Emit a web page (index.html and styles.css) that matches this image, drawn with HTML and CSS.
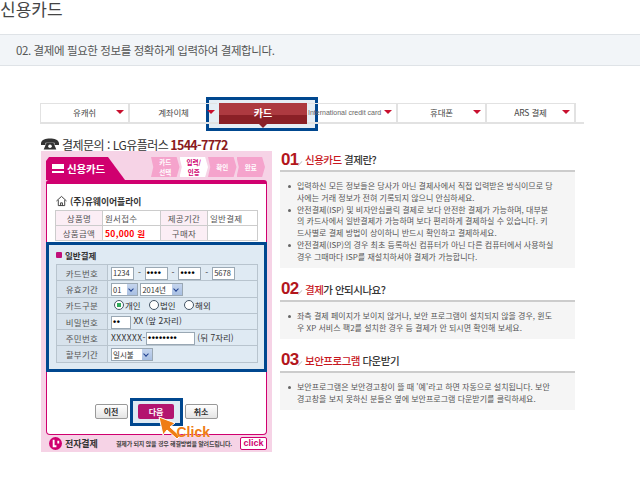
FILE: index.html
```html
<!DOCTYPE html>
<html lang="ko">

<head>
    <meta charset="UTF-8">
    <title>신용카드</title>
    <link rel="stylesheet" href="styles.css">
</head>

<body>
    <h1 class="page-title">신용카드</h1>
    <div class="notice">02. 결제에 필요한 정보를 정확하게 입력하여 결제합니다.</div>

    <!-- Payment type tabs -->
    <div class="tabs">
        <div class="tab">유캐쉬<i class="caret"></i></div>
        <div class="tab tab-short">계좌이체<i class="caret"></i></div>
        <div class="tab tab-active">카드</div>
        <div class="tab tab-small">International credit card<i class="caret"></i></div>
        <div class="tab">휴대폰<i class="caret"></i></div>
        <div class="tab">ARS 결제<i class="caret"></i></div>
    </div>

    <div class="content">
        <!-- Left: payment window -->
        <div class="left">
            <div class="phone">
                <svg class="phone-icon" width="18" height="12" viewBox="0 0 20 12">
                    <path d="M0 5C1 1 5 0 10 0s9 1 10 5v2h-5V4.500H5V7H0z" fill="#333" />
                    <path d="M6 5h8l3 7H3z" fill="#333" />
                    <circle cx="10" cy="8.500" r="2" fill="#fff" />
                </svg>
                <span>결제문의 : LG유플러스</span> <b>1544-7772</b>
            </div>
            <div class="window">
                <div class="window-head">
                    <div class="window-tab">
                        <svg width="12" height="9" viewBox="0 0 12 9">
                            <rect width="12" height="9" fill="#fff" />
                            <rect y="5" width="12" height="2" fill="#d0006f" />
                        </svg>
                        신용카드
                    </div>
                    <div class="steps">
                        <div class="step">카드<br>선택</div>
                        <div class="step step-on">입력/<br>인증</div>
                        <div class="step">확인</div>
                        <div class="step">완료</div>
                    </div>
                </div>
                <div class="window-body">
                    <div class="shop">
                        <svg width="11" height="12" viewBox="0 0 12 12">
                            <path d="M.5 6 6 1l5.500 5M2.500 5v6h7V5M5 11V8h2v3" fill="none" stroke="#333" />
                        </svg>
                        (주)유웨이어플라이
                    </div>
                    <table class="goods">
                        <tr>
                            <th>상품명</th>
                            <td class="goods-wide">원서접수</td>
                            <th>제공기간</th>
                            <td>일반결제</td>
                        </tr>
                        <tr>
                            <th>상품금액</th>
                            <td class="price">50,000 원</td>
                            <th>구매자</th>
                            <td></td>
                        </tr>
                    </table>

                    <div class="pay-box">
                        <div class="pay-title"><i class="bullet"></i>일반결제</div>
                        <table class="pay-form">
                            <tr>
                                <th>카드번호</th>
                                <td class="card-row">
                                    <span class="field w23">1234</span> -
                                    <span class="field w23 dots">••••</span> -
                                    <span class="field w23 dots">••••</span> -
                                    <span class="field w23">5678</span>
                                </td>
                            </tr>
                            <tr>
                                <th>유효기간</th>
                                <td>
                                    <span class="select w27">01<i class="arrow"></i></span>
                                    <span class="select w43">2014년<i class="arrow"></i></span>
                                </td>
                            </tr>
                            <tr>
                                <th>카드구분</th>
                                <td class="radios">
                                    <i class="radio radio-on"></i>개인
                                    <i class="radio"></i>법인
                                    <i class="radio"></i>해외
                                </td>
                            </tr>
                            <tr>
                                <th>비밀번호</th>
                                <td><span class="field w20 dots">••</span> XX (앞 2자리)</td>
                            </tr>
                            <tr>
                                <th>주민번호</th>
                                <td><span class="masked">XXXXXX-</span><span class="field w49 dots">••••••••</span> (뒤 7자리)</td>
                            </tr>
                            <tr>
                                <th>할부기간</th>
                                <td><span class="select w42">일시불<i class="arrow"></i></span></td>
                            </tr>
                        </table>
                    </div>

                    <div class="buttons">
                        <div class="btn">이전</div>
                        <div class="btn-wrap">
                            <div class="btn btn-next">다음</div>
                            <svg class="click-arrow" width="24" height="25" viewBox="0 0 24 25">
                                <path d="M1 1l16 6-5 4 10 9-3 3-10-9-4 5z" fill="#ef7d14" stroke="#fff" />
                            </svg>
                            <span class="click-text">Click</span>
                        </div>
                        <div class="btn">취소</div>
                    </div>
                </div>
                <div class="window-foot">
                    <svg width="13" height="13" viewBox="0 0 14 14">
                        <circle cx="7" cy="7" r="7" fill="#d0006f" />
                        <path d="M5 3v7h3M10 4v3" fill="none" stroke="#fff" stroke-width="2" />
                    </svg>
                    <b class="foot-brand">전자결제</b>
                    <span class="foot-text">결제가 되지 않을 경우 해결방법을 알려드립니다.</span>
                    <span class="foot-click">click</span>
                </div>
            </div>
        </div>

        <!-- Right: help text -->
        <div class="right">
            <div class="help-head">
                <span class="num">01</span>
                <span class="help-title"><em>신용카드</em> 결제란?</span>
            </div>
            <ul class="help-box">
                <li>입력하신 모든 정보들은 당사가 아닌 결제사에서 직접 입력받은 방식이므로 당<br>사에는 거래 정보가 전혀 기록되지 않으니 안심하세요.</li>
                <li>안전결제(ISP) 및 비자안심클릭 결제로 보다 안전한 결제가 가능하며, 대부분<br>의 카드사에서 일반결제가 가능하며 보다 편리하게 결제하실 수 있습니다. 키<br>드사별로 결제 방법이 상이하니 반드시 확인하고 결제하세요.</li>
                <li>안전결제(ISP)의 경우 최초 등록하신 컴퓨터가 아닌 다른 컴퓨터에서 사용하실<br>경우 그때마다 ISP를 재설치하셔야 결제가 가능합니다.</li>
            </ul>

            <div class="help-head">
                <span class="num">02</span>
                <span class="help-title"><em>결제</em>가 안되시나요?</span>
            </div>
            <ul class="help-box">
                <li>좌측 결제 페이지가 보이지 않거나, 보안 프로그램이 설치되지 않을 경우, 윈도<br>우 XP 서비스 팩2를 설치한 경우 등 결제가 안 되시면 확인해 보세요.</li>
            </ul>

            <div class="help-head">
                <span class="num">03</span>
                <span class="help-title"><em>보안프로그램</em> 다운받기</span>
            </div>
            <ul class="help-box">
                <li>보안프로그램은 보안경고창이 뜰 때 '예'라고 하면 자동으로 설치됩니다. 보안<br>경고창을 보지 못하신 분들은 옆에 보안프로그램 다운받기를 클릭하세요.</li>
            </ul>
        </div>
    </div>
</body>

</html>
```

FILE: styles.css
```css
body {
    margin: 0;
    font-family: "Noto Sans CJK KR", "Noto Sans", sans-serif;
    color: #333;
    background: #fff;
    overflow: hidden;
}

.page-title {
    margin: 0;
    height: 34px;
    font-size: 17px;
    line-height: 17px;
    font-weight: 400;
    color: #444;
}

.notice {
    height: 32px;
    box-sizing: border-box;
    padding-left: 16px;
    line-height: 30px;
    font-size: 11.500px;
    letter-spacing: -0.4px;
    color: #555;
    background: #f2f5f8;
    border-top: 1px solid #dfe3e7;
    border-bottom: 1px solid #dfe3e7;
}

/* Tabs */
.tabs {
    display: flex;
    width: 544px;
    height: 21px;
    margin: 37px 0 0 40px;
    border-left: 1px solid #e2e2e2;
    border-bottom: 2px solid #e2e2e2;
    box-sizing: border-box;
}

.tab {
    position: relative;
    width: 89px;
    box-sizing: border-box;
    border-top: 1px solid #e2e2e2;
    border-right: 2px solid #e2e2e2;
    text-align: center;
    font-size: 8.500px;
    letter-spacing: -0.2px;
    line-height: 16px;
    color: #444;
}

.tab-short {
    width: 87px;
    border-right: 0;
}

.tab-small {
    width: 90px;
    font-family: "Liberation Sans", sans-serif;
    font-size: 7px;
    letter-spacing: 0;
    white-space: nowrap;
    padding-top: 1px;
    text-align: left;
    color: #666;
}

.caret {
    position: absolute;
    right: 4px;
    top: 6px;
    border: 4px solid transparent;
    border-top: 4px solid #c8102e;
    border-bottom: 0;
}

.tab-short .caret {
    right: 2px;
}

.tab-active {
    width: 88px;
    margin: 0 1px -2px 2px;
    border: 0;
    background: linear-gradient(#ad3a40 55%, #8a2026 55%);
    color: #fff;
    font-weight: 700;
    line-height: 20px;
    font-size: 10px;
    letter-spacing: 0;
}

/* blue callout around the active tab */
.tab-active::before {
    content: "";
    position: absolute;
    z-index: -1;
    left: -13px;
    top: -6px;
    width: 106px;
    height: 28px;
    border: 3px solid #00478f;
    background: #e6eef5;
}

.tab-active::after {
    content: "";
    position: absolute;
    left: 40px;
    bottom: -4px;
    border: 4px solid transparent;
    border-top: 4px solid #8a2026;
    border-bottom: 0;
}

/* Two columns */
.content {
    display: flex;
    margin: 13px 0 0 41px;
}

.left {
    width: 231px;
    margin-right: 8px;
}

.phone {
    display: flex;
    align-items: center;
    gap: 3px;
    height: 14px;
    font-size: 12px;
    letter-spacing: -0.5px;
    white-space: nowrap;
}

.phone b {
    color: #8a1a20;
    font-size: 12.500px;
    letter-spacing: -0.7px;
    margin-left: -1px;
}

.window {
    height: 301px;
    background: #f6d3e6;
    padding: 6px 5px 0;
    box-sizing: border-box;
}

.window-head {
    display: flex;
    justify-content: space-between;
    height: 23px;
}

.window-tab {
    display: flex;
    align-items: center;
    gap: 3px;
    width: 79px;
    box-sizing: border-box;
    padding-left: 6px;
    color: #fff;
    font-size: 10.500px;
    letter-spacing: -0.2px;
    font-weight: 700;
    background: #d0006f;
    clip-path: polygon(0 4px, 3px 0, 62px 0, 79px 100%, 0 100%);
}

.steps {
    display: flex;
    width: 114px;
    height: 20px;
    margin-right: 2px;
}

.step {
    flex: 1;
    display: flex;
    align-items: center;
    justify-content: center;
    background: #f5a3cc;
    color: #fff;
    font-size: 6.500px;
    line-height: 10px;
    text-align: center;
    font-weight: 700;
    clip-path: polygon(0 0, 90% 0, 100% 50%, 90% 100%, 0 100%, 8% 50%);
}

.step-on {
    background: #fff;
    color: #d0006f;
}

.window-body {
    height: 255px;
    border: 1px solid #d0006f;
    border-top: 4px solid #d0006f;
    border-radius: 3px 3px 4px 4px;
    background: #fff;
    box-sizing: border-box;
}

.shop {
    display: flex;
    align-items: center;
    gap: 3px;
    height: 12px;
    margin: 11px 0 0 9px;
    font-size: 8.800px;
    font-weight: 700;
}

.goods {
    width: 202px;
    margin: 3px 0 0 8px;
    border-collapse: collapse;
    table-layout: fixed;
    font-size: 8.500px;
    letter-spacing: 0.3px;
    color: #555;
}

.goods th,
.goods td {
    height: 15px;
    box-sizing: border-box;
    padding: 0 2px;
    border: 1px solid #ccc;
    font-weight: 400;
    line-height: 10px;
}

.goods th {
    background: #fbeef5;
    text-align: center;
    width: 47px;
}

.goods td {
    width: 50px;
}

.goods .goods-wide {
    width: 58px;
}

.goods .price {
    color: #f00;
    font-weight: 700;
}

.pay-box {
    width: 221px;
    height: 130px;
    margin: 1px 0 0 -1px;
    border: 3px solid #00478f;
    box-sizing: border-box;
    background: #dfeaf3;
    padding: 4px 7px 0 7px;
}

.pay-title {
    display: flex;
    align-items: center;
    gap: 3px;
    height: 12px;
    font-size: 8.500px;
    font-weight: 700;
}

.bullet {
    width: 6px;
    height: 6px;
    background: #c0107a;
    border-radius: 1px;
}

.pay-form {
    width: 202px;
    margin-top: 3px;
    border-collapse: collapse;
    font-size: 8.500px;
    white-space: nowrap;
}

.pay-form th,
.pay-form td {
    height: 15.300px;
    padding: 0 3px;
    border: 1px solid #b8c4ce;
    font-weight: 400;
    line-height: 12px;
}

.pay-form th {
    width: 44px;
    text-align: center;
    letter-spacing: 0.3px;
    color: #555;
    background: #d7e2ec;
}

.card-row {
    word-spacing: 1.500px;
}

.masked {
    letter-spacing: 0.4px;
}

.field,
.select {
    display: inline-flex;
    align-items: center;
    box-sizing: border-box;
    height: 13px;
    padding-left: 1px;
    vertical-align: middle;
    background: #fff;
    border: 1px solid #9aa8b4;
    font-size: 7.500px;
    line-height: 10px;
}

.w20 { width: 20px; }
.w23 { width: 23px; }
.w27 { width: 27px; }
.w42 { width: 42px; }
.w43 { width: 43px; }
.w49 { width: 49px; }

.dots {
    color: #000;
    font-weight: 700;
    font-family: "Liberation Sans", sans-serif;
    font-size: 9px;
    letter-spacing: 0.5px;
}

.select {
    justify-content: space-between;
    padding-right: 0;
}

.arrow {
    width: 10px;
    height: 11px;
    margin-left: auto;
    background: linear-gradient(#c5d5ee, #a8bfe2);
    position: relative;
}

.arrow::after {
    content: "";
    position: absolute;
    left: 2px;
    top: 3px;
    width: 3px;
    height: 3px;
    border-right: 1.500px solid #1f3f8f;
    border-bottom: 1.500px solid #1f3f8f;
    transform: rotate(45deg);
}

.radio {
    display: inline-block;
    width: 8px;
    height: 8px;
    margin: 0 1px 0 6px;
    border: 1px solid #456;
    border-radius: 50%;
    background: #fff;
    vertical-align: -1px;
}

.radio-on {
    margin-left: 3px;
    background: radial-gradient(#2eaa5a 40%, #fff 45%);
}

.buttons {
    display: flex;
    justify-content: center;
    gap: 2px;
    margin-top: 32px;
    margin-left: -1px;
}

.btn {
    width: 33px;
    height: 15px;
    box-sizing: border-box;
    border: 1px solid #999;
    border-radius: 2px;
    background: linear-gradient(#fff, #e4e4e4);
    text-align: center;
    font-size: 8px;
    font-weight: 700;
    line-height: 13px;
}

.btn-wrap {
    position: relative;
    width: 53px;
    height: 15px;
    display: flex;
    justify-content: center;
}

.btn-next {
    position: relative;
    z-index: 1;
    width: 36px;
    border: 0;
    background: #b3146f;
    color: #fff;
    line-height: 15px;
}

/* blue callout around the next button */
.btn-wrap::before {
    content: "";
    position: absolute;
    left: 0;
    top: -6px;
    width: 47px;
    height: 22px;
    border: 3px solid #00478f;
    background: #dfeaf3;
}

.click-arrow {
    position: absolute;
    left: 28px;
    top: 12px;
    z-index: 2;
}

.click-text {
    position: absolute;
    left: 47px;
    top: 21px;
    z-index: 2;
    font-family: "Liberation Sans", sans-serif;
    font-size: 14px;
    line-height: 15px;
    font-weight: 700;
    color: #ef7d14;
    text-shadow: 0 0 1px #fff;
}

.window-foot {
    display: flex;
    align-items: center;
    height: 17px;
    padding-left: 3px;
}

.foot-brand {
    margin-left: 3px;
    font-size: 9px;
    letter-spacing: -0.1px;
    width: 51px;
    flex: none;
}

.foot-text {
    font-size: 6px;
    letter-spacing: -0.18px;
    white-space: nowrap;
    font-weight: 700;
    color: #444;
    flex: 1;
}

.foot-click {
    width: 25px;
    height: 11px;
    border: 1px solid #d0006f;
    border-radius: 2px;
    background: #fff;
    color: #d0006f;
    text-align: center;
    font: 700 9px/11px "Liberation Sans", sans-serif;
}

/* Help column */
.right {
    width: 295px;
    margin-top: 15px;
}

.help-head {
    display: flex;
    align-items: center;
    height: 18px;
    border-bottom: 2px solid #ccc;
}

.num {
    position: relative;
    width: 25px;
    padding-left: 1px;
    box-sizing: border-box;
    color: #b3161c;
    font: 700 17px/16px "Liberation Sans", sans-serif;
    letter-spacing: -0.8px;
    margin-top: -3px;
}

/* grey tail after the section number */
.num::after {
    content: "";
    position: absolute;
    left: 17px;
    top: 11px;
    width: 6px;
    height: 1px;
    background: #ccc;
    transform: rotate(-45deg);
}

.help-title {
    font-size: 10.500px;
    font-weight: 500;
    letter-spacing: -0.5px;
    margin-top: -3px;
}

.help-title em {
    font-style: normal;
    color: #c8161d;
}

.help-box {
    margin: 0 0 14px 0;
    padding: 8px 0 5.400px 17px;
    list-style: none;
    background: #f5f5f5;
    font-size: 8px;
    line-height: 11.800px;
    color: #555;
    white-space: nowrap;
}

.help-box li {
    position: relative;
}

.help-box li::before {
    content: "";
    position: absolute;
    left: -9px;
    top: 5px;
    width: 3px;
    height: 3px;
    border-radius: 50%;
    background: #666;
}
```
